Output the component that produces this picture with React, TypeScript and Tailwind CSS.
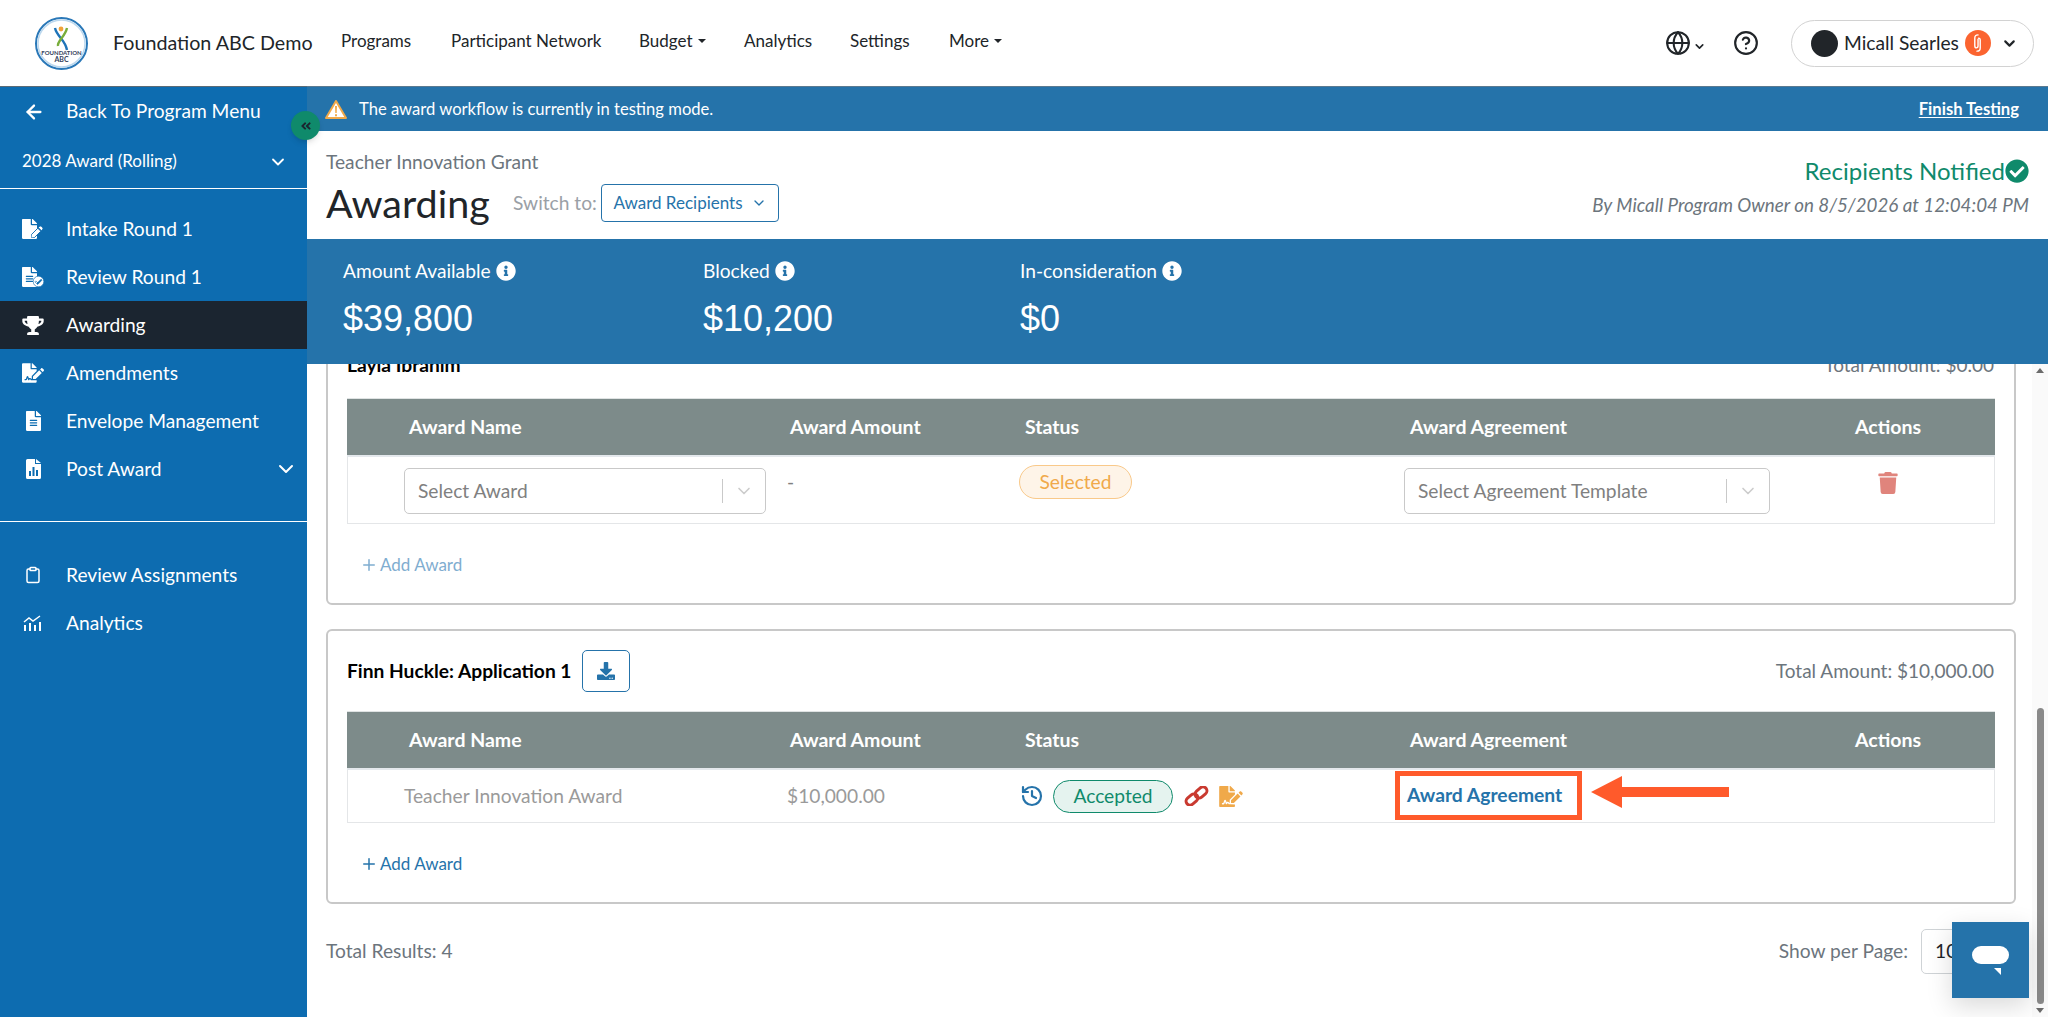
import React from "react";
import { ChevronDown, ArrowLeft, Globe, CircleHelp, Clipboard, History, Plus } from "lucide-react";
import { FaFileSignature, FaFileAlt, FaTrophy, FaFile, FaInfoCircle, FaCheckCircle, FaTrash, FaDownload, FaPen, FaAngleDoubleLeft } from "react-icons/fa";

const LOGO = () => (
  <svg viewBox="0 0 53 53" className="w-[53px] h-[53px]">
    <circle cx="26.5" cy="26.5" r="25.5" fill="white" stroke="#2a78b8" strokeWidth="2" />
    <circle cx="26.5" cy="26.5" r="23.5" fill="none" stroke="#bcd8ee" strokeWidth="1.5" />
    <circle cx="26" cy="12" r="2.4" fill="#f1a33b" />
    <path d="M20 11 C22 20 30 22 32 33" fill="none" stroke="#1f74b8" strokeWidth="2.4" />
    <path d="M32 11 C30 20 22 24 23 29" fill="none" stroke="#78ad3a" strokeWidth="2.4" />
    <text x="26.5" y="38" textAnchor="middle" fontSize="6" fontWeight="700" fill="#33415c" fontFamily="Lato, sans-serif">FOUNDATION</text>
    <text x="26.5" y="45" textAnchor="middle" fontSize="7" fontWeight="700" fill="#33415c" fontFamily="Lato, sans-serif">ABC</text>
  </svg>
);

const IntakeIcon = () => (
  <span className="relative block w-[22px] h-[20px]">
    <FaFile className="absolute left-0 top-0 text-white w-[15px] h-[20px]" />
    <FaPen className="absolute left-[9px] top-[7px] text-white w-[12px] h-[12px] stroke-[#0d6cb0] stroke-[40px]" />
  </span>
);
const ReviewIcon = () => (
  <span className="relative block w-[22px] h-[20px]">
    <FaFileAlt className="absolute left-0 top-0 text-white w-[15px] h-[20px]" />
    <FaCheckCircle className="absolute left-[11px] top-[9px] text-white w-[11px] h-[11px] stroke-[#0d6cb0] stroke-[30px]" />
  </span>
);
const PostIcon = () => (
  <svg viewBox="0 0 15 20" className="w-[15px] h-[20px]">
    <path d="M1.5 0H9v5h6v13.5a1.5 1.5 0 0 1-1.5 1.5h-12A1.5 1.5 0 0 1 0 18.500V1.500A1.500 1.500 0 0 1 1.500 0Z M10 0l5 4h-5Z" fill="white" />
    <path d="M3 12h2v5H3zM6.500 8h2v9h-2zM10 11h2v6h-2z" fill="#0d6cb0" />
  </svg>
);
const AnalyticsIcon = () => (
  <svg viewBox="0 0 20 16" className="w-[20px] h-[16px]">
    <path d="M1 7l5-4 4 3 7-5" fill="none" stroke="white" strokeWidth="1.500" />
    <path d="M1 10h2v6H1zM6 8h2v8H6zM11 10h2v6h-2zM16 7h2v9h-2z" fill="white" />
  </svg>
);
const LinkIcon = () => (
  <svg viewBox="0 0 25 20" className="ml-[11px] w-[25px] h-[20px]">
    <g fill="none" stroke="#c93a30" strokeWidth="3">
      <rect x="1.500" y="9.500" width="13" height="8" rx="4" transform="rotate(-40 8 13.500)" />
      <rect x="10.500" y="2.500" width="13" height="8" rx="4" transform="rotate(-40 17 6.500)" />
    </g>
  </svg>
);

const SideItem = ({ icon, label, active, chevron }: { icon: React.ReactNode; label: string; active?: boolean; chevron?: boolean }) => (
  <div className={`flex items-center h-12 text-white text-[19.200px] ${active ? "bg-[#1b2530]" : ""}`}>
    <div className="w-[66px] pl-[22px] shrink-0 flex justify-start">
      <div className="w-[22px] flex justify-center">{icon}</div>
    </div>
    <span className="flex-1">{label}</span>
    {chevron && <ChevronDown className="w-[24px] h-[24px] mr-[9px]" strokeWidth={2} />}
  </div>
);

const TableHead = () => (
  <div className="grid grid-cols-[443px_235px_385px_445px_1fr] h-[59px] items-center bg-[#7d8b8a] text-white font-bold text-[19.500px] border-t border-[#dfe3e3] border-b-2 border-b-[#e4e8ec]">
    <div className="pl-[62px]">Award Name</div>
    <div>Award Amount</div>
    <div>Status</div>
    <div>Award Agreement</div>
    <div>Actions</div>
  </div>
);

const FakeSelect = ({ label, w }: { label: string; w: string }) => (
  <div className={`${w} h-[46px] flex items-center border border-[#c9c9c9] rounded-[5px] bg-white text-[#808080] text-[19.200px] pl-[13px]`}>
    <span className="flex-1">{label}</span>
    <span className="h-6 w-px bg-[#c9c9c9]" />
    <ChevronDown className="w-[20px] h-[20px] mx-[11px] text-[#cccccc]" strokeWidth={2} />
  </div>
);

const WarnIcon = () => (
  <svg viewBox="0 0 22 19" className="w-[22px] h-[19px]">
    <path d="M11 1 L21 18 H1 Z" fill="white" stroke="#f0a94a" strokeWidth="2" strokeLinejoin="round" />
    <path d="M10 6h2l-.3 7h-1.400ZM10 14.300h2v2h-2z" fill="#f0a94a" />
  </svg>
);

const Stat = ({ label, value, w }: { label: string; value: string; w: string }) => (
  <div className={`${w} shrink-0`}>
    <div className="flex items-center gap-[5px] text-[19.200px] h-[24px] text-white">
      {label}
      <FaInfoCircle className="w-[20px] h-[20px]" />
    </div>
    <div className="mt-[14px] text-[36px] leading-[44px] font-['Liberation_Sans',sans-serif] text-white">{value}</div>
  </div>
);

export default function App() {
  return (
    <div className="w-[2048px] h-[1017px] overflow-hidden flex flex-col bg-white font-['Lato',sans-serif] relative text-[#212529]">
      <header className="h-[86px] shrink-0 flex items-center bg-white">
        <div className="ml-[35px] w-[53px] shrink-0"><LOGO /></div>
        <div className="ml-[25px] w-[228px] text-[19.700px] text-[#212529]">Foundation ABC Demo</div>
        <nav className="flex items-center text-[17px] pb-[4px] text-[#212529]">
          <span className="w-[110px]">Programs</span>
          <span className="w-[188px]">Participant Network</span>
          <span className="w-[105px] flex items-center gap-[5px]">Budget<span className="w-0 h-0 border-x-[4px] border-x-transparent border-t-[4px] border-t-[#212529]" /></span>
          <span className="w-[106px]">Analytics</span>
          <span className="w-[99px]">Settings</span>
          <span className="flex items-center gap-[5px]">More<span className="w-0 h-0 border-x-[4px] border-x-transparent border-t-[4px] border-t-[#212529]" /></span>
        </nav>
        <div className="flex-1" />
        <Globe className="w-[26px] h-[26px] text-[#212529]" strokeWidth={1.9} />
        <ChevronDown className="w-[13px] h-[13px] mt-[6px] ml-[2px]" strokeWidth={3} />
        <CircleHelp className="w-[26px] h-[26px] ml-[27px] text-[#212529]" strokeWidth={2} />
        <div className="ml-[32px] mr-[14px] w-[243px] h-[47px] rounded-full border border-[#d2d2d2] flex items-center pl-[19px]">
          <span className="w-[27px] h-[27px] rounded-full bg-[#212529] shrink-0" />
          <span className="ml-[6px] text-[19.200px]">Micall Searles</span>
          <span className="ml-[6px] w-[26px] h-[26px] rounded-full bg-[#fb6430] flex items-center justify-center shrink-0">
            <svg viewBox="0 0 12 18" className="w-[13px] h-[20px]"><path d="M6.500 1.500C4 1.500 3.500 3 3.500 4.500v7c0 1.500.5 2 1.500 2s1.500-.5 1.500-2v-6M5.500 16.500C8 16.500 8.500 15 8.500 13.500v-7c0-1.500-.5-2-1.500-2" fill="none" stroke="white" strokeWidth="1.300" strokeLinecap="round" /></svg>
          </span>
          <ChevronDown className="w-[17px] h-[17px] ml-[10px]" strokeWidth={3} />
        </div>
      </header>

      <div className="flex-1 flex min-h-0 relative">
        <aside className="w-[307px] shrink-0 bg-[#0d6cb0] text-white border-t border-[#5b6b76]">
          <div className="h-[49px] flex items-center pl-[23px] text-[19.200px]">
            <ArrowLeft className="w-[22px] h-[22px] mr-[21px]" strokeWidth={2.5} />
            <span>Back To Program Menu</span>
          </div>
          <div className="h-[53px] flex items-center pl-[22px] pr-[19px] text-[17px] border-b border-white mb-[16px]">
            <span className="flex-1 pb-[3px]">2028 Award (Rolling)</span>
            <ChevronDown className="w-[20px] h-[20px]" strokeWidth={2.2} />
          </div>
          <SideItem icon={<IntakeIcon />} label="Intake Round 1" />
          <SideItem icon={<ReviewIcon />} label="Review Round 1" />
          <SideItem icon={<FaTrophy className="w-[22px] h-[19px]" />} label="Awarding" active />
          <SideItem icon={<FaFileSignature className="w-[22px] h-[20px]" />} label="Amendments" />
          <SideItem icon={<FaFileAlt className="w-[15px] h-[20px]" />} label="Envelope Management" />
          <SideItem icon={<PostIcon />} label="Post Award" chevron />
          <div className="mt-[28px] border-t border-white mb-[29px]" />
          <SideItem icon={<Clipboard className="w-[18px] h-[20px]" strokeWidth={2} />} label="Review Assignments" />
          <SideItem icon={<AnalyticsIcon />} label="Analytics" />
        </aside>

        <main className="flex-1 min-w-0 flex flex-col">
          <div className="h-[45px] shrink-0 bg-[#2573aa] border-t border-[#5b7a90] flex items-center pl-[18px] pr-[29px] text-white text-[16.600px]">
            <WarnIcon />
            <span className="ml-[12px] flex-1">The award workflow is currently in testing mode.</span>
            <span className="font-bold underline underline-offset-2">Finish Testing</span>
          </div>
          <div className="h-[108px] shrink-0 bg-white pl-[19px] pr-[19px] flex justify-between">
            <div>
              <div className="mt-[19px] text-[19.200px] leading-[24px] text-[#6c757d]">Teacher Innovation Grant</div>
              <div className="flex items-center mt-[4px]">
                <span className="text-[39.500px] leading-[50px] w-[187px]">Awarding</span>
                <span className="text-[19.200px] text-[#9aa0a6] w-[88px]">Switch to:</span>
                <span className="w-[178px] h-[38px] border border-[#2573aa] rounded-[4px] flex items-center justify-center gap-[8px] text-[#2573aa] text-[17px]">
                  Award Recipients
                  <ChevronDown className="w-[16px] h-[16px]" strokeWidth={2} />
                </span>
              </div>
            </div>
            <div className="flex flex-col items-end">
              <div className="mt-[25px] flex items-center text-[24px] leading-[30px] text-[#0f8a6b]">
                Recipients Notified
                <FaCheckCircle className="w-[24px] h-[24px]" />
              </div>
              <div className="mt-[7px] text-[18.750px] italic text-[#6c757d] leading-[24px]">By Micall Program Owner on 8/5/2026 at 12:04:04 PM</div>
            </div>
          </div>
          <div className="h-[125px] shrink-0 bg-[#2573aa] flex pl-[36px] pt-[20px]">
            <Stat label="Amount Available" value="$39,800" w="w-[360px]" />
            <Stat label="Blocked" value="$10,200" w="w-[317px]" />
            <Stat label="In-consideration" value="$0" w="w-[300px]" />
          </div>

          <div className="flex-1 min-h-0 flex">
            <div className="flex-1 min-w-0 overflow-hidden pl-[19px] pr-[16px]">
              <div className="-mt-[48px]">
                <section className="h-[289px] border-2 border-[#c8c8c8] rounded-[6px] px-[19px] flex flex-col">
                  <div className="h-[80px] flex items-center justify-between pt-[14px] pr-px">
                    <span className="font-bold text-[19.200px] text-black">Layla Ibrahim</span>
                    <span className="text-[19px] text-[#6c757d]">Total Amount: $0.00</span>
                  </div>
                  <TableHead />
                  <div className="grid grid-cols-[443px_235px_385px_445px_1fr] h-[67px] border border-t-0 border-[#e4e6e8] text-[#808080] text-[19.200px]">
                    <div className="pl-[56px] pt-[11px]"><FakeSelect label="Select Award" w="w-[362px]" /></div>
                    <div className="-ml-[4px] pt-[11px]">-</div>
                    <div className="-ml-[7px] pt-[8px]">
                      <span className="inline-flex items-center justify-center w-[113px] h-[34px] rounded-full border border-[#f9c98a] bg-[#fef4e8] text-[#f0a94a]">Selected</span>
                    </div>
                    <div className="-ml-[7px] pt-[11px]"><FakeSelect label="Select Agreement Template" w="w-[366px]" /></div>
                    <div className="pl-[22px] pt-[15px]"><FaTrash className="w-[20px] h-[22px] text-[#e0847c]" /></div>
                  </div>
                  <div className="mt-[28px] flex items-center text-[17px] text-[#7fadd0] pl-[13px]">
                    <Plus className="w-[18px] h-[18px] mr-[2px]" strokeWidth={2} />Add Award
                  </div>
                </section>

                <section className="mt-[24px] h-[275px] border-2 border-[#c8c8c8] rounded-[6px] px-[19px] flex flex-col">
                  <div className="h-[80px] flex items-center justify-between pr-px">
                    <div className="flex items-center">
                      <span className="font-bold text-[19.200px] text-black">Finn Huckle: Application 1</span>
                      <span className="ml-[10px] w-[48px] h-[42px] border border-[#2573aa] rounded-[5px] flex items-center justify-center text-[#2573aa]"><FaDownload className="w-[18px] h-[18px]" /></span>
                    </div>
                    <span className="text-[19px] text-[#6c757d]">Total Amount: $10,000.00</span>
                  </div>
                  <TableHead />
                  <div className="grid grid-cols-[443px_235px_385px_445px_1fr] h-[53px] items-center border border-t-0 border-[#e4e6e8] text-[#9a9a9a] text-[19.200px]">
                    <div className="pl-[56px]">Teacher Innovation Award</div>
                    <div className="-ml-[4px]">$10,000.00</div>
                    <div className="-ml-[6px] flex items-center">
                      <History className="w-[24px] h-[24px] text-[#2573aa]" strokeWidth={2.2} />
                      <span className="ml-[9px] w-[120px] h-[33px] rounded-full border border-[#0f8a6b] bg-[#e5f3ef] text-[#0f8a6b] flex items-center justify-center">Accepted</span>
                      <LinkIcon />
                      <FaFileSignature className="ml-[10px] w-[24px] h-[21px] text-[#f0a94a]" />
                    </div>
                    <div className="relative h-full">
                      <span className="absolute -left-[16px] top-[1px] w-[187px] h-[49px] border-[5px] border-[#ff5a2b] flex items-center pl-[7px] font-bold text-[#2573aa] text-[19.300px] bg-white">Award Agreement</span>
                      <svg viewBox="0 0 140 34" className="absolute left-[179px] top-[5px] w-[140px] h-[34px]">
                        <path d="M1 17 L32 1 V12 H139 V22 H32 V33 Z" fill="#ff5a2b" />
                      </svg>
                    </div>
                    <div />
                  </div>
                  <div className="mt-[28px] flex items-center text-[17px] text-[#2573aa] pl-[13px]">
                    <Plus className="w-[18px] h-[18px] mr-[2px]" strokeWidth={2} />Add Award
                  </div>
                </section>

                <div className="mt-[25px] flex items-center justify-between text-[19.200px] text-[#6c757d]">
                  <span>Total Results: 4</span>
                  <div className="flex items-center mr-[5px]">
                    <span>Show per Page:</span>
                    <span className="ml-[13px] w-[90px] h-[45px] border border-[#cfd3d6] rounded-[5px] flex items-center pl-[13px] text-[#212529] text-[19.200px]">10</span>
                  </div>
                </div>
              </div>
            </div>
            <div className="w-[16px] shrink-0 bg-[#fafafa] flex flex-col items-center">
              <span className="mt-[4px] w-0 h-0 border-x-[4px] border-x-transparent border-b-[5px] border-b-[#6b6b6b]" />
              <div className="flex-1" />
              <div className="w-[7px] h-[296px] rounded-full bg-[#8a8a8a]" />
              <span className="mt-[4px] mb-[4px] w-0 h-0 border-x-[4px] border-x-transparent border-t-[5px] border-t-[#6b6b6b]" />
            </div>
          </div>
        </main>

        <div className="absolute left-[291px] top-[25px] w-[29px] h-[29px] rounded-full bg-[#0f8a6b] shadow-md flex items-center justify-center text-[#1b2530]">
          <FaAngleDoubleLeft className="w-[12px] h-[12px]" />
        </div>
      </div>

      <div className="absolute left-[1952px] top-[922px] w-[77px] h-[76px] bg-[#2573aa] shadow-[0_8px_24px_rgba(0,0,0,0.15)] flex items-center justify-center">
        <svg viewBox="0 0 37 29" className="w-[37px] h-[29px]">
          <rect x="0" y="0" width="37" height="18" rx="9" fill="white" />
          <path d="M22 22h7v7Z" fill="white" />
        </svg>
      </div>
    </div>
  );
}
